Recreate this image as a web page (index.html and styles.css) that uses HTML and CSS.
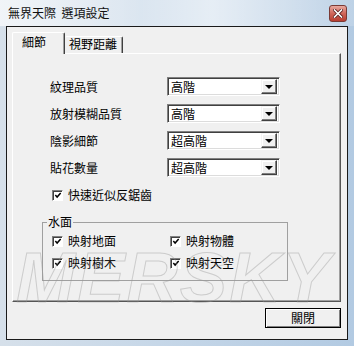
FILE: index.html
```html
<!DOCTYPE html>
<html lang="zh-Hant">
<head>
<meta charset="UTF-8">
<title>無界天際 選項設定</title>
<link rel="stylesheet" href="styles.css">
</head>
<body>
<div class="window">
    <div class="titlebar">
        <span class="title">無界天際&nbsp;&nbsp;選項設定</span>
        <span class="close-btn">
            <svg width="10" height="9" viewBox="0 0 10 9">
                <path d="M1.5 1 L8.5 8 M8.5 1 L1.5 8" stroke="#5a2020" stroke-width="3.2" stroke-linecap="square"/>
                <path d="M1.5 1 L8.5 8 M8.5 1 L1.5 8" stroke="#fff" stroke-width="1.6" stroke-linecap="square"/>
            </svg>
        </span>
    </div>

    <div class="client">
        <div class="tabs">
            <div class="tab active">細節</div>
            <div class="tab">視野距離</div>
        </div>

        <div class="panel">
            <div class="form">
                <div class="row">
                    <span class="label">紋理品質</span>
                    <div class="combo"><span class="value">高階</span><span class="arrow"></span></div>
                </div>
                <div class="row">
                    <span class="label">放射模糊品質</span>
                    <div class="combo"><span class="value">高階</span><span class="arrow"></span></div>
                </div>
                <div class="row">
                    <span class="label">陰影細節</span>
                    <div class="combo"><span class="value">超高階</span><span class="arrow"></span></div>
                </div>
                <div class="row">
                    <span class="label">貼花數量</span>
                    <div class="combo"><span class="value">超高階</span><span class="arrow"></span></div>
                </div>
            </div>

            <div class="check main-check"><span class="box"><svg width="9" height="9" viewBox="0 0 9 9"><path d="M1.5 4 L3.5 6.2 L7.5 1.8" fill="none" stroke="#000" stroke-width="1.7"/></svg></span>快速近似反鋸齒</div>

            <fieldset class="group">
                <legend>水面</legend>
                <div class="group-grid">
                    <div class="check"><span class="box"><svg width="9" height="9" viewBox="0 0 9 9"><path d="M1.5 4 L3.5 6.2 L7.5 1.8" fill="none" stroke="#000" stroke-width="1.7"/></svg></span>映射地面</div>
                    <div class="check"><span class="box"><svg width="9" height="9" viewBox="0 0 9 9"><path d="M1.5 4 L3.5 6.2 L7.5 1.8" fill="none" stroke="#000" stroke-width="1.7"/></svg></span>映射物體</div>
                    <div class="check"><span class="box"><svg width="9" height="9" viewBox="0 0 9 9"><path d="M1.5 4 L3.5 6.2 L7.5 1.8" fill="none" stroke="#000" stroke-width="1.7"/></svg></span>映射樹木</div>
                    <div class="check"><span class="box"><svg width="9" height="9" viewBox="0 0 9 9"><path d="M1.5 4 L3.5 6.2 L7.5 1.8" fill="none" stroke="#000" stroke-width="1.7"/></svg></span>映射天空</div>
                </div>
            </fieldset>
        </div>

        <div class="footer">
            <button class="btn">關閉</button>
        </div>
    </div>

    <div class="watermark">MERSKY</div>
</div>
</body>
</html>
```

FILE: styles.css
```css
body {
    margin: 0;
    font-family: "Noto Sans CJK TC", "Noto Sans CJK SC", sans-serif;
    font-size: 12px;
    color: #000;
}
.window {
    position: relative;
    width: 354px;
    height: 346px;
    box-sizing: border-box;
    padding: 0 6px 6px 6px;
    background: linear-gradient(to right, #d6e0ea 0%, #c6d7e8 45%, #b2cae2 100%);
    overflow: hidden;
}
.titlebar {
    height: 26px;
    margin: 0 -6px;
    padding: 0 7px 0 8px;
    display: flex;
    align-items: center;
    justify-content: space-between;
    background: linear-gradient(to right, rgba(255,255,255,0.65) 0%, rgba(255,255,255,0.35) 40%, rgba(255,255,255,0.6) 60%, rgba(255,255,255,0.15) 100%);
}
.title {
    line-height: 16px;
    color: #111;
}
.close-btn {
    width: 18px;
    height: 17px;
    box-sizing: border-box;
    border: 1px solid #7a3a35;
    border-radius: 3px;
    background: linear-gradient(to bottom, #e8a89f 0%, #d0665a 50%, #b83d30 100%);
    display: flex;
    align-items: center;
    justify-content: center;
}
.client {
    height: 314px;
    box-sizing: border-box;
    border: 1px solid #1a1a1a;
    background: #f0f0f0;
    padding: 5px 6px 0 5px;
}
.tabs {
    display: flex;
    height: 21px;
    position: relative;
    z-index: 1;
}
.tab {
    box-sizing: border-box;
    background: #f0f0f0;
    border-top: 1px solid #fff;
    border-right: 1px solid #404040;
    border-radius: 2px 2px 0 0;
    box-shadow: inset -1px 0 0 #a0a0a0;
    margin-top: 4px;
    height: 17px;
    width: 58px;
    padding-left: 4px;
    line-height: 14px;
}
.tab.active {
    margin-top: 0;
    height: 22px;
    width: 53px;
    border-left: 1px solid #fff;
    padding: 1px 0 0 9px;
    line-height: 16px;
}
.panel {
    width: 329px;
    height: 249px;
    box-sizing: border-box;
    border: 1px solid;
    border-color: #fff #555 #555 #fff;
    box-shadow: inset -1px -1px 0 #a0a0a0;
    padding: 23px 0 0 29px;
}
.form {
    display: flex;
    flex-direction: column;
    gap: 8px;
    padding-left: 8px;
}
.row {
    display: flex;
    align-items: center;
    height: 19px;
}
.label {
    width: 117px;
    line-height: 16px;
}
.combo {
    width: 113px;
    height: 19px;
    box-sizing: border-box;
    border: 1px solid;
    border-color: #808080 #fff #fff #808080;
    box-shadow: inset 1px 1px 0 #404040, inset -1px -1px 0 #dcdcdc;
    background: #fff;
    display: flex;
    align-items: center;
    justify-content: space-between;
    padding: 2px 2px 2px 3px;
}
.value {
    line-height: 14px;
}
.arrow {
    width: 16px;
    height: 15px;
    box-sizing: border-box;
    border: 1px solid;
    border-color: #f4f4f4 #404040 #404040 #f4f4f4;
    box-shadow: inset -1px -1px 0 #808080, inset 1px 1px 0 #fff;
    background: #f0f0f0;
    position: relative;
}
.arrow::after {
    content: "";
    position: absolute;
    left: 3px;
    top: 5px;
    border-left: 4px solid transparent;
    border-right: 4px solid transparent;
    border-top: 4px solid #000;
}
.check {
    display: flex;
    align-items: center;
    height: 16px;
    line-height: 16px;
}
.box {
    width: 11px;
    height: 11px;
    box-sizing: border-box;
    border: 1px solid;
    border-color: #808080 #fff #fff #808080;
    box-shadow: inset 1px 1px 0 #404040;
    background: #fff;
    margin-right: 5px;
    display: flex;
    align-items: center;
    justify-content: center;
}
.box svg {
    margin: 1px 0 0 1px;
}
.main-check {
    margin-top: 10px;
    padding-left: 10px;
}
.group {
    width: 246px;
    box-sizing: border-box;
    margin: 12px 0 0 0;
    border: 1px solid #a0a0a0;
    padding: 4px 0 9px 9px;
    min-inline-size: 0;
}
.group legend {
    padding: 0 1px;
    margin-left: -5px;
    line-height: 14px;
}
.group-grid {
    display: grid;
    grid-template-columns: 118px 118px;
    row-gap: 6px;
}
.footer {
    display: flex;
    justify-content: flex-end;
    margin-top: 6px;
}
.btn {
    width: 76px;
    height: 20px;
    box-sizing: border-box;
    border: 1px solid #000;
    box-shadow: inset 1px 1px 0 #fff, inset -1px -1px 0 #808080;
    background: #f0f0f0;
    font-family: inherit;
    font-size: 12px;
    line-height: 14px;
    padding: 0;
    color: #000;
}
.watermark {
    position: absolute;
    left: 16px;
    top: 242px;
    font-family: "Liberation Sans", sans-serif;
    font-weight: bold;
    font-style: italic;
    font-size: 71px;
    line-height: 71px;
    letter-spacing: 2px;
    color: transparent;
    -webkit-text-stroke: 1px rgba(150, 150, 150, 0.4);
    pointer-events: none;
}
```
